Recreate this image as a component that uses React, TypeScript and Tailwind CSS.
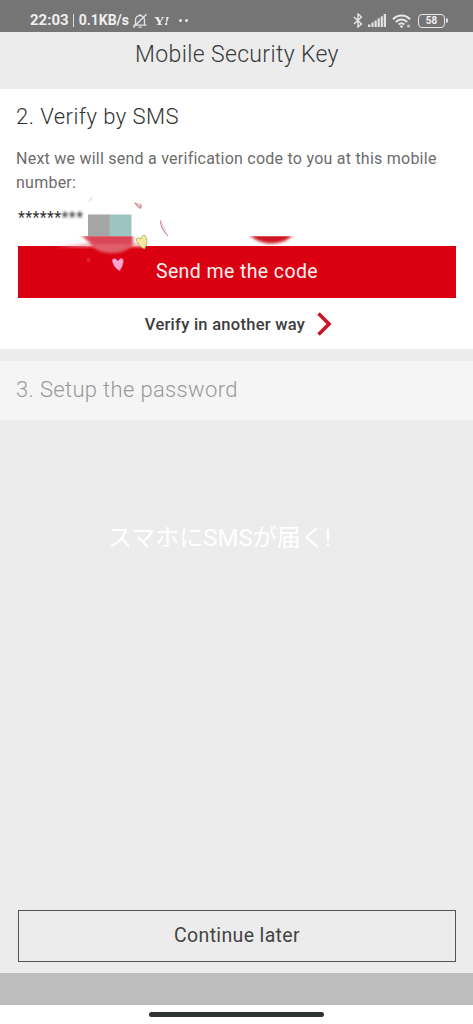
import React from 'react';

function StatusBar() {
  return (
    <header className="flex h-8 shrink-0 items-end justify-between bg-[#757575] pb-[3px] pl-[30px] pr-[25px] text-[#efefef]">
      <div className="flex h-[17px] items-center">
        <span className="whitespace-nowrap text-[15px] font-bold leading-[17px]">22:03</span>
        <span className="ml-[4px] mr-[5px] h-[13px] w-px bg-[#dcdcdc]" />
        <span className="whitespace-nowrap text-[14px] font-bold leading-[17px]">0.1KB/s</span>
        <svg className="ml-[3px] h-[16px] w-[16px]" viewBox="0 0 16 16" fill="none" stroke="#e4e4e4" strokeWidth="1.3">
          <path d="M3.5 11.5V7a4.5 4.5 0 0 1 9 0v4.5M1.5 12.2h13M6.5 14.2h3M8 1v2M1.2 14.5L14.5 1.2" />
        </svg>
        <span className="ml-[6px] w-4 whitespace-nowrap font-['Liberation_Serif',serif] text-[13px] font-bold leading-[17px]">
          <span className="inline-block origin-left scale-x-[1.15]">Y<i className="-ml-px">!</i></span>
        </span>
        <span className="ml-[9px] flex gap-[3px]">
          <span className="h-[3px] w-[3px] rounded-full bg-[#eeeeee]" />
          <span className="h-[3px] w-[3px] rounded-full bg-[#eeeeee]" />
        </span>
      </div>
      <div className="flex h-[17px] items-center">
        <svg className="h-[15px] w-[10px]" viewBox="0 0 10 15" fill="none" stroke="#e6e6e6" strokeWidth="1.4">
          <path d="M1 4l7.5 7L5 14V1l3.500 3L1 11" />
        </svg>
        <svg className="ml-[5px] h-[13px] w-[18px]" viewBox="0 0 18 13" fill="#e2e2e2">
          <rect x="0" y="10.500" width="2.400" height="2.500" />
          <rect x="3.400" y="8.500" width="2.200" height="4.500" />
          <rect x="6.500" y="6.500" width="2.200" height="6.500" />
          <rect x="9.600" y="4.300" width="2.200" height="8.700" />
          <rect x="12.700" y="2.300" width="2.200" height="10.700" />
          <rect x="15.700" y="0" width="2.300" height="13" />
        </svg>
        <svg className="ml-[6px] h-[14px] w-[20px]" viewBox="0 0 20 14" fill="none" stroke="#e8e8e8" strokeWidth="2">
          <path d="M1 5.200c4.800-5 12.200-5 17 0M3.800 8c3.300-3.300 8.100-3.300 11.400 0M6.600 10.600c1.700-1.600 4.100-1.600 5.800 0" />
          <circle cx="9.500" cy="12.500" r="1.300" fill="#e8e8e8" stroke="none" />
          <circle cx="16.500" cy="12" r="1.600" fill="#c4c4c4" stroke="none" />
        </svg>
        <div className="ml-[6px] flex h-[14px] w-[27px] items-center justify-center rounded-[4px] border-[1.5px] border-[#e6e6e6] text-[10px] font-bold leading-none">
          58
        </div>
        <span className="ml-px h-[5px] w-[2px] rounded-r bg-[#e0e0e0]" />
      </div>
    </header>
  );
}

// Blurred mosaic and heart stickers that hide the phone number
function NumberCover() {
  return (
    <svg className="pointer-events-none absolute left-0 top-[105px] h-[85px] w-[310px]" viewBox="0 194 310 85" fill="none">
      <defs>
        <filter id="soft" x="-20%" y="-40%" width="140%" height="180%">
          <feGaussianBlur stdDeviation="1.6" />
        </filter>
        <filter id="faint" x="-50%" y="-50%" width="200%" height="200%">
          <feGaussianBlur stdDeviation="0.6" />
        </filter>
        <clipPath id="below">
          <rect x="50" y="236.300" width="260" height="43" />
        </clipPath>
        <clipPath id="above">
          <rect x="50" y="236.300" width="260" height="9.700" />
        </clipPath>
      </defs>
      <rect x="88" y="214.500" width="22" height="22" fill="#a5a5a5" />
      <rect x="109.500" y="214.500" width="22" height="22" fill="#9dc4c1" />
      <g clipPath="url(#below)">
        <path d="M56 246.500L90 243.500L142 243.500L146 247Z" fill="#f1a1a8" filter="url(#soft)" />
        <path d="M80 234H133V244C126 256 98 256 91 244Z" fill="#dc4554" filter="url(#soft)" />
        <path d="M92 244H131C125 255 98 255 92 244Z" fill="#e0606c" filter="url(#soft)" />
      </g>
      <g clipPath="url(#above)">
        <path d="M248 233H294C285 247 259 247 248 233Z" fill="#ce1524" filter="url(#soft)" />
      </g>
      <path d="M88 202.500Q92 200 92.500 196Q91 199 88 202.500Z" fill="#d9bfc6" filter="url(#faint)" />
      <path d="M134.500 202.500Q138 202 139 204Q141 202 141.500 205L140.500 208.500Q137 207 134.500 202.500Z" fill="#ecbcc4" />
      <path d="M134.500 202.500Q137 207 140.500 208.500L141.500 205" stroke="#b5606e" strokeWidth=".8" />
      <path d="M160.500 220.500Q160 229 168 236Q165 226 160.500 220.500Z" fill="#f5d8dd" />
      <path d="M160.500 220.500Q160.500 229 168 236" stroke="#b76a76" strokeWidth=".8" />
      <path d="M136 239Q139 236.500 141 239Q142 234 145 235.500Q149 240 144.500 249Q138 246 136 239Z" fill="#f1eba0" stroke="#aaa04f" strokeWidth=".7" />
      <path d="M112 260Q115 256.500 118 261Q120 257 123 259Q124.500 264 119.500 271Q113 267 112 260Z" fill="#f8a8ce" stroke="#d4437d" strokeWidth=".6" />
      <circle cx="88.500" cy="260" r="2" fill="#e23c4c" opacity=".6" filter="url(#faint)" />
    </svg>
  );
}

function VerifySection() {
  return (
    <section className="relative h-[260px] shrink-0 bg-white px-[18px] pt-[14px]">
      <h2 className="-ml-[2px] whitespace-nowrap text-[22px] font-light leading-7 tracking-[0.45px] text-[#333333]">2. Verify by SMS</h2>
      <p className="-ml-[2px] mt-[16px] whitespace-nowrap text-[16px] leading-6 tracking-[0.24px] text-[#6c6c6c]">
        Next we will send a verification code to you at this mobile
        <br />
        number:
      </p>
      <div className="mt-[12px] flex h-[18px] whitespace-nowrap text-[16px] leading-[22px] text-[#333333]">
        <span className="tracking-[0.35px]">******</span>
        <span className="tracking-[0.5px] blur-[1.3px]">***</span>
      </div>
      <button className="mt-[21px] flex h-[52px] w-[438px] items-center justify-center bg-[#db0011] pb-px text-[19.5px] tracking-[0.4px] text-[#fff0f0]">
        Send me the code
      </button>
      <a className="mt-[14px] flex h-6 items-center justify-center gap-[12px] whitespace-nowrap pl-[4px] text-[16.5px] font-medium tracking-[0.27px] text-[#3d3d3d]">
        <span className="pt-[2px]">Verify in another way</span>
        <svg className="h-6 w-[15px]" viewBox="0 0 15 24" fill="none" stroke="#cc1525" strokeWidth="3.600">
          <path d="M1.500 1.500L12 12L1.500 22.500" />
        </svg>
      </a>
      <NumberCover />
    </section>
  );
}

export default function App() {
  return (
    <div className="flex h-[1024px] w-[473px] flex-col overflow-hidden bg-[#ececec] font-[Roboto,sans-serif]">
      <StatusBar />
      <div className="h-[57px] shrink-0 pl-px pt-[8px] text-center">
        <h1 className="whitespace-nowrap text-[23px] font-light leading-[30px] tracking-[0.35px] text-[#3a3a3a]">Mobile Security Key</h1>
      </div>
      <VerifySection />
      <section className="mt-3 h-[59px] shrink-0 bg-[#f5f5f5] pl-[16px] pt-[15px]">
        <h2 className="whitespace-nowrap text-[22px] font-light leading-7 tracking-[0.35px] text-[#999999]">3. Setup the password</h2>
      </section>
      <main className="flex flex-1 flex-col justify-between px-[18px] pb-[11px] pt-[102px]">
        <p className="ml-[90px] whitespace-nowrap font-[Roboto,'Noto_Sans_CJK_JP',sans-serif] text-[24px] leading-8 text-white">スマホにSMSが届く!</p>
        <button className="flex h-[52px] w-[438px] items-center justify-center border border-[#555555] pb-px text-[19.5px] tracking-[0.35px] text-[#444444]">
          Continue later
        </button>
      </main>
      <div className="h-8 shrink-0 bg-[#bdbdbd]" />
      <footer className="flex h-[19px] shrink-0 justify-center bg-white pt-[7px]">
        <div className="h-[5px] w-[175px] rounded-full bg-[#303432]" />
      </footer>
    </div>
  );
}
